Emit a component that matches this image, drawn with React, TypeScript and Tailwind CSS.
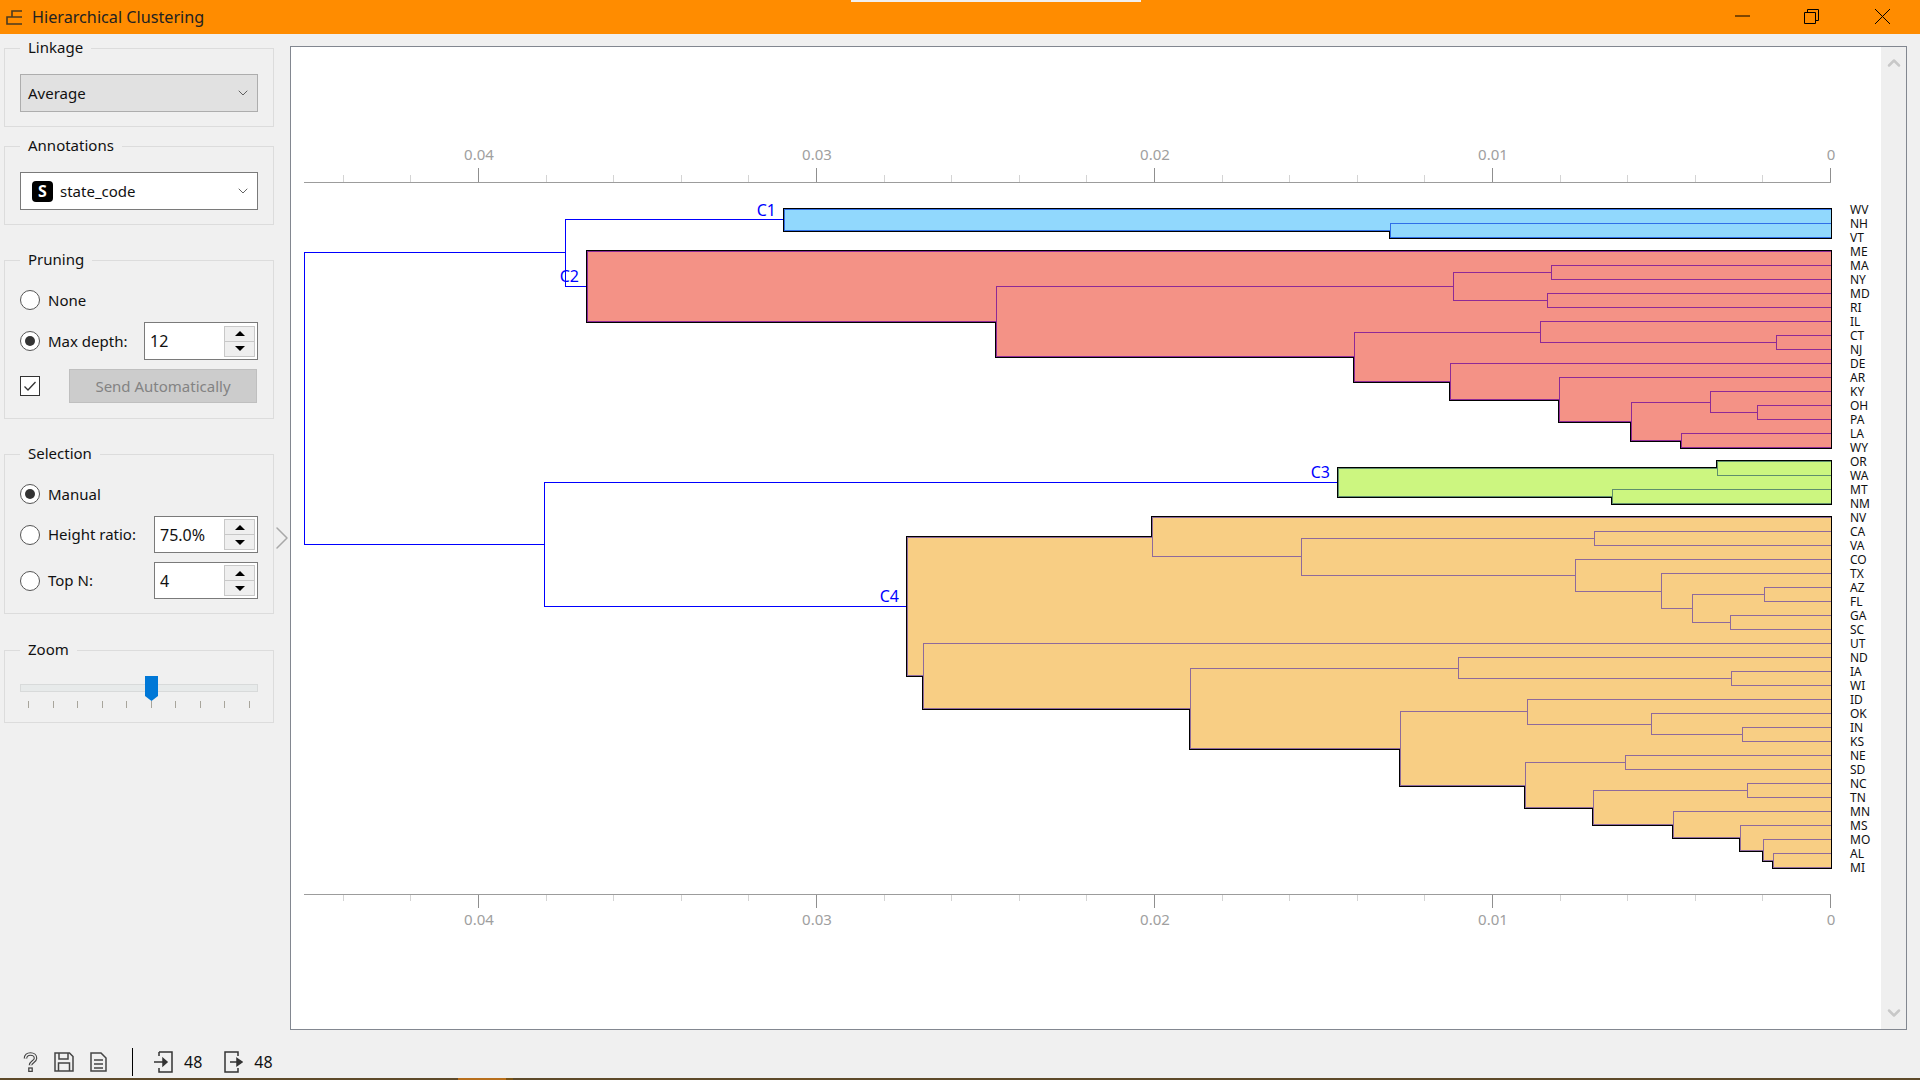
import { ChevronDown, ChevronRight, ChevronUp } from "lucide-react";

const FONT = "font-['Noto_Sans',sans-serif]";

const LABELS = "WV NH VT ME MA NY MD RI IL CT NJ DE AR KY OH PA LA WY OR WA MT NM NV CA VA CO TX AZ FL GA SC UT ND IA WI ID OK IN KS NE SD NC TN MN MS MO AL MI".split(" ");
const LEAF_X = 1830;

type Tree = number | [number, Tree, Tree];
type Pt = [number, number];

const leafY = (i: number) => 209 + i * 14;
const treeY = (t: Tree): number =>
  typeof t === "number" ? leafY(t) : (treeY(t[1]) + treeY(t[2])) / 2;
const treeX = (t: Tree) => (typeof t === "number" ? LEAF_X : t[0]);

// every U of the dendrogram as one polyline
function segments(t: Tree, out: string[] = []) {
  if (typeof t === "number") return out;
  const [x, a, b] = t;
  const ya = Math.round(treeY(a)) + 0.5;
  const yb = Math.round(treeY(b)) + 0.5;
  const px = x + 0.5;
  out.push(`${treeX(a) + 0.5},${ya} ${px},${ya} ${px},${yb} ${treeX(b) + 0.5},${yb}`);
  segments(a, out);
  segments(b, out);
  return out;
}

function edge(t: Tree, side: 1 | 2): Pt[] {
  if (typeof t === "number") return [[LEAF_X + 0.5, leafY(t) + 0.5]];
  const y = Math.round(treeY(t[side])) + 0.5;
  return [[t[0] + 0.5, y], ...edge(t[side], side)];
}

// contour of a cluster: top stairs going right, bottom stairs coming back
function contour(t: Tree) {
  const stairs = (pts: Pt[]) => {
    const res: Pt[] = [];
    pts.forEach((p, i) => {
      if (i > 0) res.push([p[0], pts[i - 1][1]]);
      res.push(p);
    });
    return res;
  };
  return [...stairs(edge(t, 1)), ...stairs(edge(t, 2)).reverse()].map((p) => p.join(",")).join(" ");
}

const C1: Tree = [784, 0, [1390, 1, 2]];
const C2: Tree = [587, 3, [996,
  [1453, [1551, 4, 5], [1547, 6, 7]],
  [1354, [1540, 8, [1776, 9, 10]],
    [1450, 11, [1559, 12, [1631, [1710, 13, [1757, 14, 15]], [1681, 16, 17]]]]]]];
const C3: Tree = [1338, [1717, 18, 19], [1612, 20, 21]];
const C4: Tree = [907,
  [1152, 22, [1301, [1594, 23, 24], [1575, 25, [1661, 26, [1692, [1764, 27, 28], [1730, 29, 30]]]]]],
  [923, 31, [1190, [1458, 32, [1731, 33, 34]],
    [1400, [1527, 35, [1651, 36, [1742, 37, 38]]],
      [1525, [1625, 39, 40], [1593, [1747, 41, 42],
        [1673, 43, [1740, 44, [1763, 45, [1773, 46, 47]]]]]]]]]];

const CLUSTERS = [
  { name: "C1", tree: C1, fill: "#91d8fd", line: "#2f6fe8", lx: 776, ly: 216 },
  { name: "C2", tree: C2, fill: "#f49286", line: "#8e2a96", lx: 579, ly: 282 },
  { name: "C3", tree: C3, fill: "#ccf680", line: "#5f8f6c", lx: 1330, ly: 478 },
  { name: "C4", tree: C4, fill: "#f8ce84", line: "#8f6a9b", lx: 899, ly: 602 },
];

const MAJOR = [
  { v: "0.04", x: 478 },
  { v: "0.03", x: 816 },
  { v: "0.02", x: 1154 },
  { v: "0.01", x: 1492 },
  { v: "0", x: 1830 },
];
const MINOR = Array.from({ length: 23 }, (_, i) => Math.round(LEAF_X - i * 67.6));

function Axis({ y, dir }: { y: number; dir: 1 | -1 }) {
  return (
    <g fill="#a0a0a0" fontSize="15" textAnchor="middle">
      {MINOR.map((x) => (
        <line key={x} x1={x + 0.5} x2={x + 0.5} y1={y} y2={y + dir * 7} stroke="#d4d4d4" />
      ))}
      {MAJOR.map((m) => (
        <g key={m.v}>
          <line x1={m.x + 0.5} x2={m.x + 0.5} y1={y} y2={y + dir * 14} stroke="#8f8f8f" />
          <text x={m.x + 1} y={dir < 0 ? y - 22 : y + 31}>{m.v}</text>
        </g>
      ))}
      <line x1={304} x2={LEAF_X + 1} y1={y + 0.5} y2={y + 0.5} stroke="#9c9c9c" />
    </g>
  );
}

function Dendrogram() {
  return (
    <svg width="1590" height="982" viewBox="291 47 1590 982" className="block shrink-0 bg-white" shapeRendering="crispEdges">
      <Axis y={182} dir={-1} />
      <Axis y={894} dir={1} />

      {/* top of the tree, above the four clusters */}
      <g fill="none" stroke="#0000ff">
        <polyline points="784.5,219.5 565.5,219.5 565.5,286.5 587.5,286.5" />
        <polyline points="565.5,252.5 304.5,252.5 304.5,544.5 544.5,544.5" />
        <polyline points="907.5,606.5 544.5,606.5 544.5,482.5 1338.5,482.5" />
      </g>

      {CLUSTERS.map((c) => (
        <g key={c.name}>
          <polygon points={contour(c.tree)} fill="none" stroke="#000" strokeWidth="3" />
          <polygon points={contour(c.tree)} fill={c.fill} />
          {segments(c.tree).map((pts) => (
            <polyline key={pts} points={pts} fill="none" stroke={c.line} />
          ))}
          <text x={c.lx} y={c.ly} fill="#0000ff" fontSize="16" textAnchor="end">
            {c.name}
          </text>
        </g>
      ))}

      <g fontSize="12" fill="#111">
        {LABELS.map((l, i) => (
          <text key={l} x={1850} y={leafY(i) + 5}>{l}</text>
        ))}
      </g>
    </svg>
  );
}

function GroupBox({ title, children, className }: { title: string; children: React.ReactNode; className: string }) {
  return (
    <fieldset className={`ml-1 w-[270px] border border-[#dcdcdc] ${className}`}>
      <legend className="ml-[15px] h-[22px] px-2 text-[15px] leading-[20px] text-[#111]">{title}</legend>
      {children}
    </fieldset>
  );
}

function Radio({ checked, label }: { checked?: boolean; label: string }) {
  return (
    <div className="flex h-5 shrink-0 items-center gap-[8px]">
      <span className="flex h-5 w-5 items-center justify-center rounded-full border border-[#555] bg-white">
        {checked && <span className="h-[10px] w-[10px] rounded-full bg-[#333]" />}
      </span>
      <span className="whitespace-nowrap text-[15px] text-[#111]">{label}</span>
    </div>
  );
}

function Spin({ value, className }: { value: string; className: string }) {
  return (
    <div className={`flex items-center justify-between border border-[#7a7a7a] bg-white pr-[2px] ${className}`}>
      <span className="pl-[5px] text-[16px] text-[#111]">{value}</span>
      <div className="flex h-[31px] w-[31px] flex-col border border-[#c8c8c8] bg-[#efefef]">
        <button className="flex flex-1 items-center justify-center border-b border-[#c8c8c8]">
          <span className="h-0 w-0 border-x-[5px] border-b-[5px] border-x-transparent border-b-black" />
        </button>
        <button className="flex flex-1 items-center justify-center">
          <span className="h-0 w-0 border-x-[5px] border-t-[5px] border-x-transparent border-t-black" />
        </button>
      </div>
    </div>
  );
}

function Combo({ children, className }: { children: React.ReactNode; className: string }) {
  return (
    <div className={`mx-[15px] mt-[15px] flex h-[38px] items-center justify-between pr-[6px] text-[15px] text-[#111] ${className}`}>
      {children}
      <ChevronDown size={16} strokeWidth={1.25} className="text-[#444]" />
    </div>
  );
}

function Sidebar() {
  const ticks = [0, 1, 2, 3, 4, 5, 6, 7, 8, 9];
  return (
    <aside className="flex w-[277px] shrink-0 flex-col pt-[3px]">
      <GroupBox title="Linkage" className="h-[90px]">
        <Combo className="border border-[#adadad] bg-[#e1e1e1] pl-[7px]">Average</Combo>
      </GroupBox>
      <GroupBox title="Annotations" className="mt-[8px] h-[90px]">
        <Combo className="border border-[#7a7a7a] bg-white pl-[11px]">
          <span className="flex items-center gap-[7px]">
            <span className="flex h-[21px] w-[21px] items-center justify-center rounded-[4px] bg-black text-[16px] font-bold text-white">S</span>
            state_code
          </span>
        </Combo>
      </GroupBox>

      <GroupBox title="Pruning" className="mt-[24px] h-[170px]">
        <div className="flex flex-col px-[15px] pt-[19px]">
          <Radio label="None" />
          <div className="mt-[12px] flex h-[38px] items-center justify-between">
            <Radio checked label="Max depth:" />
            <Spin value="12" className="h-[38px] w-[114px]" />
          </div>
          <div className="mt-[9px] flex h-[34px] items-center justify-between">
            <span className="flex h-5 w-5 items-center justify-center border border-[#333] bg-white">
              <svg width="14" height="12" viewBox="0 0 14 12" fill="none" stroke="#333" strokeWidth="1.3">
                <path d="M1.5 6.5 5 10l7.5-8" />
              </svg>
            </span>
            <button className="mr-px h-[34px] w-[188px] border border-[#bfbfbf] bg-[#cccccc] text-[15px] text-[#838383]">
              Send Automatically
            </button>
          </div>
        </div>
      </GroupBox>

      <GroupBox title="Selection" className="mt-[24px] h-[171px]">
        <div className="flex flex-col px-[15px] pt-[19px]">
          <Radio checked label="Manual" />
          <div className="mt-[12px] flex h-[37px] items-center justify-between">
            <Radio label="Height ratio:" />
            <Spin value="75.0%" className="h-[37px] w-[104px]" />
          </div>
          <div className="mt-[9px] flex h-[37px] items-center justify-between">
            <Radio label="Top N:" />
            <Spin value="4" className="h-[37px] w-[104px]" />
          </div>
        </div>
      </GroupBox>

      <GroupBox title="Zoom" className="mt-[25px] h-[84px]">
        <div className="relative mx-[15px] mt-[15px] h-8">
          <div className="absolute inset-x-0 top-2 h-2 border border-[#d8dada] bg-[#e7eaea]" />
          <svg width="13" height="25" viewBox="0 0 13 25" className="absolute left-[125px] top-0">
            <path d="M0 0h13v20l-6.5 5L0 20z" fill="#0078d7" />
          </svg>
          <div className="absolute inset-x-2 top-[25px] flex justify-between">
            {ticks.map((t) => (
              <span key={t} className="h-[7px] w-px bg-[#a8a59c]" />
            ))}
          </div>
        </div>
      </GroupBox>
    </aside>
  );
}

function StatusBar() {
  return (
    <footer className="flex h-[48px] shrink-0 items-center pl-[23px] pt-[16px] text-[16px] text-[#111]">
      <svg width="15" height="20" viewBox="0 0 15 20" fill="none">
        <path d="M2.5 6.5C2.5 3.5 4.6 2 7.5 2s5 1.6 5 4.2c0 3.4-5 3.6-5 7" stroke="#444" strokeWidth="3.6" />
        <path d="M2.5 6.5C2.5 3.5 4.6 2 7.5 2s5 1.6 5 4.2c0 3.4-5 3.6-5 7" stroke="#f0f0f0" strokeWidth="1.4" />
        <rect x="5.8" y="16" width="3.4" height="3.4" stroke="#444" strokeWidth="1.3" />
      </svg>
      <svg width="20" height="20" viewBox="0 0 20 20" fill="none" stroke="#444" strokeWidth="1.5" className="ml-[16px]">
        <path d="M1 1h14.5L19 4.5V19H1z" />
        <path d="M5 1v6h9V1M4.5 19v-8h11v8" />
      </svg>
      <svg width="17" height="20" viewBox="0 0 17 20" fill="none" stroke="#444" strokeWidth="1.5" className="ml-[16px]">
        <path d="M1 1h10l5 5v13H1z" />
        <path d="M4 8h9M4 12h9M4 16h9" />
      </svg>
      <span className="ml-[25px] h-7 w-px bg-black" />
      <svg width="20" height="22" viewBox="0 0 20 22" fill="none" stroke="#333" strokeWidth="1.5" className="ml-[20px]">
        <path d="M6 1h13v20H6v-4M6 5V1" />
        <path d="M1 11h11" />
        <path d="M10 7.5 14 11l-4 3.5z" fill="#333" />
      </svg>
      <span className="ml-[11px]">48</span>
      <svg width="19" height="22" viewBox="0 0 19 22" fill="none" stroke="#333" strokeWidth="1.5" className="ml-[22px]">
        <path d="M14 5V1H1v20h13v-4" />
        <path d="M6 11h8" />
        <path d="M13 7.5 18 11l-5 3.5z" fill="#333" />
      </svg>
      <span className="ml-[11px]">48</span>
    </footer>
  );
}

export default function App() {
  return (
    <div className={`flex h-[1080px] w-[1920px] flex-col overflow-hidden bg-[#f0f0f0] ${FONT}`}>
      {/* title bar */}
      <header className="relative flex h-[34px] shrink-0 items-center bg-[#ff8c00] pl-[6px] text-[#222]">
        <svg width="17" height="15" viewBox="0 0 17 15" fill="none" stroke="#4a3a20" strokeWidth="1.6">
          <path d="M16 1H6v6H1v7h15M6 7h10" />
        </svg>
        <span className="ml-[9px] text-[16.2px]">Hierarchical Clustering</span>
        <div className="absolute left-[851px] top-0 h-[2px] w-[290px] bg-[#f0f0f0]" />
        <div className="ml-auto flex items-center pb-[2px] pr-[30px]">
          <svg width="15" height="2" viewBox="0 0 15 2" className="mr-[54px]">
            <path d="M0 1h15" stroke="#000" />
          </svg>
          <svg width="15" height="15" viewBox="0 0 15 15" fill="none" stroke="#000" className="mr-[56px]">
            <path d="M.5 3.5h11v11H.5z" />
            <path d="M3.5 3.5v-3h11v11h-3" />
          </svg>
          <svg width="15" height="15" viewBox="0 0 15 15" fill="none" stroke="#000">
            <path d="M0 0l15 15M15 0 0 15" />
          </svg>
        </div>
      </header>

      <div className="flex min-h-0 flex-1">
        <Sidebar />
        <div className="mt-3 flex h-[984px] w-[13px] shrink-0 items-center">
          <ChevronRight size={40} strokeWidth={0.9} className="-ml-[15px] shrink-0 text-[#a8a8a8]" />
        </div>
        <main className="mt-3 flex h-[984px] w-[1617px] shrink-0 border border-[#828790] bg-white">
          <Dendrogram />
          <div className="flex w-[25px] flex-col items-center justify-between bg-[#efefef] py-[6px]">
            <ChevronUp size={20} strokeWidth={3} className="text-[#c8c8c8]" />
            <ChevronDown size={20} strokeWidth={3} className="text-[#c8c8c8]" />
          </div>
        </main>
      </div>

      <StatusBar />
      <div className="flex h-[2px] shrink-0 bg-[#5e4a2a]">
        <div className="ml-[458px] h-full w-[48px] bg-[#b86f1c]" />
        <div className="h-full w-[7px] bg-[#7a5416]" />
      </div>
    </div>
  );
}
